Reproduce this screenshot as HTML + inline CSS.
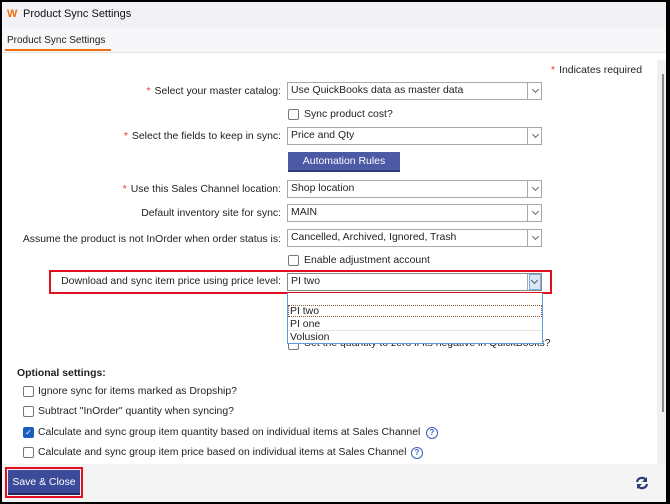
<!DOCTYPE html>
<html><head><meta charset="utf-8"><style>
*{box-sizing:border-box;margin:0;padding:0}
body{width:670px;height:504px;overflow:hidden;background:#000;font-family:"Liberation Sans",sans-serif;font-size:10.45px;color:#222;position:relative}
#win{position:absolute;left:2px;top:2px;width:664px;height:500px;background:#fff;overflow:hidden}
.a{position:absolute;white-space:nowrap}
.lbl{position:absolute;right:385px;white-space:nowrap;text-align:right}
.req{color:#e33;margin-right:4px}
.sel{position:absolute;left:285px;width:255px;height:18px;border:1px solid #a8a8a8;background:#fff;padding:0 3px;line-height:16px;white-space:nowrap}
.sel:after{content:"";position:absolute;right:0;top:0;width:13px;height:16px;border-left:1px solid #a8a8a8;background:#fff}
.sel i{position:absolute;right:3px;top:4px;width:5px;height:5px;border-right:1px solid #666;border-bottom:1px solid #666;transform:rotate(45deg);z-index:2}
.cb{position:absolute;width:11px;height:11px;border:1px solid #777;border-radius:2px;background:#fff}
.q{position:absolute;width:12px;height:12px;border:1.5px solid #3a5ec0;border-radius:50%;color:#3a5ec0;font-size:8px;font-weight:bold;text-align:center;line-height:9px}
</style></head><body><div id="win">
<div class="a" style="left:0;top:0;width:664px;height:26px;background:#f2f2f6"></div>
<div class="a" style="left:5px;top:6px;color:#f07010;font-weight:bold;font-size:11px">W</div>
<div class="a" style="left:21px;top:6px;font-size:11px;color:#111">Product Sync Settings</div>
<div class="a" style="left:0;top:26px;width:664px;height:25px;background:#f7f7f9;border-bottom:1px solid #e4e4e4"></div>
<div class="a" style="left:5px;top:33px;font-size:10px">Product Sync Settings</div>
<div class="a" style="left:3px;top:47px;width:106px;height:2px;background:#f07010"></div>
<div class="a" style="left:655px;top:58px;width:9px;height:405px;background:#f0f0f0"></div>
<div class="a" style="left:660px;top:72px;width:2px;height:338px;background:#888"></div>
<div class="a" style="left:549px;top:63px"><span class="req">*</span>Indicates required</div>

<div class="lbl" style="top:84px"><span class="req">*</span>Select your master catalog:</div>
<div class="sel" style="top:80px">Use QuickBooks data as master data<i></i></div>
<div class="cb" style="left:286px;top:107px"></div><div class="a" style="left:302px;top:107px">Sync product cost?</div>
<div class="lbl" style="top:129px"><span class="req">*</span>Select the fields to keep in sync:</div>
<div class="sel" style="top:125px">Price and Qty<i></i></div>
<div class="a" style="left:286px;top:150px;width:112px;height:20px;background:#4c5aa6;color:#fff;text-align:center;line-height:20px;border-bottom:2px solid #2f3a7a">Automation Rules</div>
<div class="lbl" style="top:182px"><span class="req">*</span>Use this Sales Channel location:</div>
<div class="sel" style="top:178px">Shop location<i></i></div>
<div class="lbl" style="top:206px">Default inventory site for sync:</div>
<div class="sel" style="top:202px">MAIN<i></i></div>
<div class="lbl" style="top:232px">Assume the product is not InOrder when order status is:</div>
<div class="sel" style="top:227px">Cancelled, Archived, Ignored, Trash<i></i></div>
<div class="cb" style="left:286px;top:253px"></div><div class="a" style="left:302px;top:253px">Enable adjustment account</div>
<div class="a" style="left:47px;top:268px;width:503px;height:24px;border:2px solid #e01020"></div>
<div class="lbl" style="top:274px">Download and sync item price using price level:</div>
<div class="sel" style="top:271px;border-color:#888">PI two<i></i></div>
<div class="a" style="left:527px;top:272px;width:12px;height:16px;background:#d8e8f8;border:1px solid #7aaee0;z-index:3"></div>
<div class="a" style="left:530px;top:276px;width:5px;height:5px;border-right:1px solid #555;border-bottom:1px solid #555;transform:rotate(45deg);z-index:4"></div>
<div class="cb" style="left:286px;top:337px"></div><div class="a" style="left:302px;top:336px">Set the quantity to zero if its negative in QuickBooks?</div>
<div class="a" style="left:285px;top:291px;width:256px;height:51px;background:#fff;border:1px solid #5a9ee0;border-top:none">
<div class="a" style="left:0;top:12px;width:254px;height:12px;border:1px dotted #8a5a3a"></div>
<div class="a" style="left:2px;top:13px">PI two</div>
<div class="a" style="left:2px;top:26px">PI one</div>
<div class="a" style="left:0;top:37px;width:254px;height:1px;background:#e4e4e4"></div>
<div class="a" style="left:2px;top:39px">Volusion</div>
</div>

<div class="a" style="left:15px;top:366px;font-weight:bold">Optional settings:</div>
<div class="cb" style="left:21px;top:384px"></div><div class="a" style="left:36px;top:384px">Ignore sync for items marked as Dropship?</div>
<div class="cb" style="left:21px;top:404px"></div><div class="a" style="left:36px;top:404px">Subtract "InOrder" quantity when syncing?</div>
<div class="cb" style="left:21px;top:425px;background:#1a5fc0;border-color:#1a5fc0;color:#fff;font-size:8px;line-height:9px;text-align:center">✓</div><div class="a" style="left:36px;top:425px">Calculate and sync group item quantity based on individual items at Sales Channel</div>
<div class="q" style="left:424px;top:425px">?</div>
<div class="cb" style="left:21px;top:445px"></div><div class="a" style="left:36px;top:445px">Calculate and sync group item price based on individual items at Sales Channel</div>
<div class="q" style="left:409px;top:445px">?</div>

<div class="a" style="left:0;top:462px;width:664px;height:38px;background:#f4f4f4"></div>
<div class="a" style="left:3px;top:465px;width:78px;height:31px;border:2px solid #e01020"></div>
<div class="a" style="left:6px;top:468px;width:72px;height:25px;background:#3c4a9a;color:#fff;text-align:center;line-height:26px;border-bottom:2px solid #222a60">Save &amp; Close</div>
<svg class="a" style="left:633px;top:474px" width="14" height="14" viewBox="0 0 14 14"><path d="M2 6A5 5 0 0 1 11 4" stroke="#2a3f7a" stroke-width="2.2" fill="none"/><path d="M12 1v5h-5z" fill="#2a3f7a"/><path d="M12 8A5 5 0 0 1 3 10" stroke="#2a3f7a" stroke-width="2.2" fill="none"/><path d="M2 13V8h5z" fill="#2a3f7a"/></svg>
</div></body></html>
